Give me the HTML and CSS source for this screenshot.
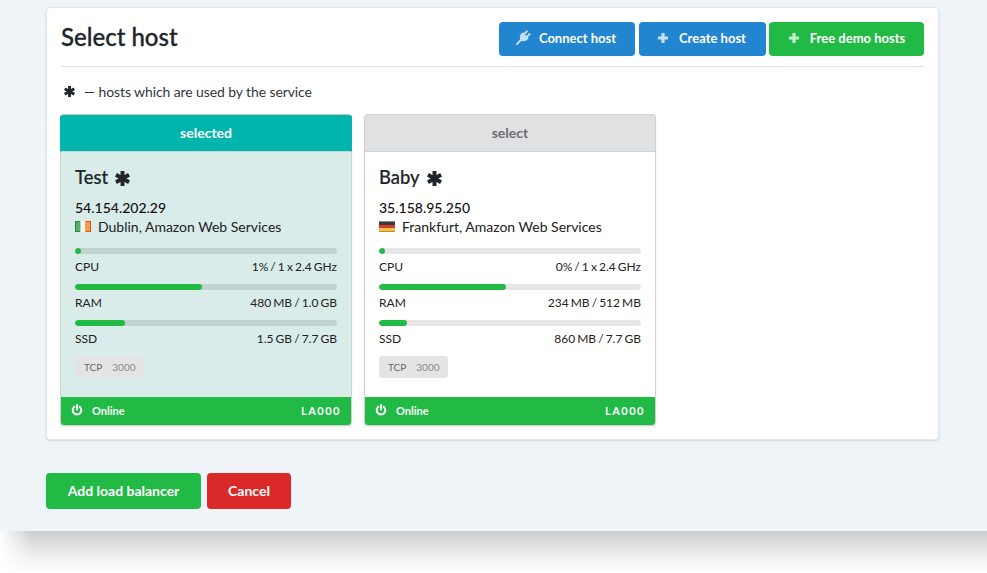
FILE: index.html
```html
<!DOCTYPE html>
<html>
<head>
    <title>Select host</title>
    <link rel="stylesheet" href="styles.css">
</head>
<body>
    <svg class="icon-defs" width="0" height="0">
        <symbol id="i-star" viewBox="0 0 16 16">
            <g stroke="currentColor" stroke-width="4.2">
                <path d="M8 0v16M1 4l14 8M15 4l-14 8"/>
            </g>
        </symbol>
        <symbol id="i-plus" viewBox="0 0 12 12">
            <path fill="currentColor" d="M4.4 1h3.2v3.4H11v3.2H7.6V11H4.4V7.6H1V4.4h3.4z"/>
        </symbol>
        <symbol id="i-plug" viewBox="0 0 16 16">
            <g fill="currentColor" transform="rotate(45 8 8)">
                <rect x="5" y="0" width="2" height="5"/>
                <rect x="9" y="0" width="2" height="5"/>
                <path d="M3.5 4.5h9V7c0 2.500-2 4.500-3.500 4.800V19H7v-7.200C5.500 11.500 3.500 9.500 3.500 7z"/>
            </g>
        </symbol>
        <symbol id="i-power" viewBox="0 0 12 12">
            <g fill="none" stroke="currentColor" stroke-width="2" stroke-linecap="round">
                <path d="M3.3 2.800a4.300 4.300 0 1 0 5.400 0"/>
                <path d="M6 1v4.600"/>
            </g>
        </symbol>
    </svg>

    <div class="app">
        <div class="panel">
            <div class="panel-head">
                <h1>Select host</h1>
                <div class="head-buttons">
                    <a class="btn btn-blue btn-connect"><svg class="btn-icon plug"><use href="#i-plug"/></svg>Connect host</a>
                    <a class="btn btn-blue btn-create"><svg class="btn-icon"><use href="#i-plus"/></svg>Create host</a>
                    <a class="btn btn-green btn-demo"><svg class="btn-icon"><use href="#i-plus"/></svg>Free demo hosts</a>
                </div>
            </div>

            <p class="legend"><svg class="legend-star"><use href="#i-star"/></svg>— hosts which are used by the service</p>

            <div class="hosts">
                <!-- Test -->
                <div class="host host-selected">
                    <div class="host-top">selected</div>
                    <div class="host-body">
                        <h3>Test <svg class="name-star"><use href="#i-star"/></svg></h3>
                        <div class="ip">54.154.202.29</div>
                        <div class="place">
                            <svg class="flag" viewBox="0 0 16 11">
                                <rect width="5.500" height="11" fill="#1f8f3f"/>
                                <rect x="1" y="1" width="4.500" height="9" fill="#55b06c"/>
                                <rect x="5.500" width="5" height="11" fill="#f4f6f2"/>
                                <rect x="10.500" width="5.500" height="11" fill="#e8501c"/>
                                <rect x="10.500" y="1" width="4.500" height="9" fill="#f59a45"/>
                            </svg>
                            Dublin, Amazon Web Services
                        </div>
                        <div class="bar"><div class="bar-fill" style="width: 2.3%"></div></div>
                        <div class="stat"><span>CPU</span><span>1% / 1 x 2.4 GHz</span></div>
                        <div class="bar"><div class="bar-fill" style="width: 48.5%"></div></div>
                        <div class="stat"><span>RAM</span><span>480 MB / 1.0 GB</span></div>
                        <div class="bar"><div class="bar-fill" style="width: 19%"></div></div>
                        <div class="stat"><span>SSD</span><span>1.5 GB / 7.7 GB</span></div>
                        <div class="port"><b>TCP</b>3000</div>
                    </div>
                    <div class="host-foot">
                        <span class="online"><svg class="power"><use href="#i-power"/></svg>Online</span>
                        <span class="la">LA000</span>
                    </div>
                </div>

                <!-- Baby -->
                <div class="host">
                    <div class="host-top">select</div>
                    <div class="host-body">
                        <h3>Baby <svg class="name-star"><use href="#i-star"/></svg></h3>
                        <div class="ip">35.158.95.250</div>
                        <div class="place">
                            <svg class="flag" viewBox="0 0 16 11">
                                <rect width="16" height="1" fill="#8a8a8a"/>
                                <rect y="1" width="16" height="3" fill="#3a3a3a"/>
                                <rect y="4" width="16" height="3" fill="#d8392d"/>
                                <rect y="7" width="16" height="3" fill="#f2c445"/>
                                <rect y="10" width="16" height="1" fill="#b8913a"/>
                            </svg>
                            Frankfurt, Amazon Web Services
                        </div>
                        <div class="bar"><div class="bar-fill" style="width: 2.3%"></div></div>
                        <div class="stat"><span>CPU</span><span>0% / 1 x 2.4 GHz</span></div>
                        <div class="bar"><div class="bar-fill" style="width: 48.5%"></div></div>
                        <div class="stat"><span>RAM</span><span>234 MB / 512 MB</span></div>
                        <div class="bar"><div class="bar-fill" style="width: 10.8%"></div></div>
                        <div class="stat"><span>SSD</span><span>860 MB / 7.7 GB</span></div>
                        <div class="port"><b>TCP</b>3000</div>
                    </div>
                    <div class="host-foot">
                        <span class="online"><svg class="power"><use href="#i-power"/></svg>Online</span>
                        <span class="la">LA000</span>
                    </div>
                </div>
            </div>
        </div>

        <div class="actions">
            <a class="btn btn-green btn-add">Add load balancer</a>
            <a class="btn btn-red btn-cancel">Cancel</a>
        </div>
    </div>
    <div class="app-shadow"></div>
</body>
</html>
```

FILE: styles.css
```css
html, body {
    margin: 0;
    height: 573px;
    overflow: hidden;
    background-color: #fff;
}
body {
    font-family: Lato, "Open Sans", sans-serif;
    color: #212529;
}
.icon-defs {
    display: block;
    height: 0;
}
.app {
    box-sizing: border-box;
    height: 531px;
    padding: 7px 48px 0 46px;
    background-color: #eff4f8;
}
/* soft shadow under the page, fades out towards the left edge */
.app-shadow {
    height: 42px;
    background-image:
        linear-gradient(to right, #fff, rgba(255, 255, 255, 0) 32px),
        linear-gradient(to bottom, #cbcbcb, #dedede 30%, #f2f2f2 65%, #fff);
}
.panel {
    box-sizing: border-box;
    height: 433px;
    padding: 14px 14px 0 14px;
    background-color: #fff;
    border: 1px solid #e3e6e9;
    border-radius: 4px;
    box-shadow: 0 1px 2px rgba(0, 0, 0, 0.12);
}
.panel-head {
    display: flex;
    justify-content: space-between;
    height: 44px;
    border-bottom: 1px solid #dee2e6;
}
h1 {
    margin: 0;
    font-size: 24px;
    font-weight: 500;
    line-height: 30px;
    -webkit-text-stroke: 0.3px #212529;
}
.head-buttons {
    display: flex;
    gap: 3px;
    height: 34px;
}
.btn {
    display: flex;
    align-items: center;
    justify-content: center;
    box-sizing: border-box;
    color: #fff;
    font-size: 14px;
    font-weight: 700;
    border-radius: 4px;
    padding-bottom: 2px;
}
.head-buttons .btn {
    font-size: 13px;
    padding-bottom: 3px;
}
.btn-blue {
    background-color: #2285d0;
}
.btn-green {
    background-color: #21ba45;
}
.btn-red {
    background-color: #db2828;
}
.head-buttons .btn-connect {
    width: 136px;
    margin-right: 1px;
    padding-right: 2px;
}
.head-buttons .btn-create {
    width: 127px;
    padding-right: 2px;
}
.btn-demo {
    width: 155px;
}
.btn-icon {
    width: 12px;
    height: 12px;
    margin-right: 10px;
    opacity: 0.75;
}
.btn-icon.plug {
    width: 15px;
    height: 15px;
    margin-right: 8px;
}
.legend {
    display: flex;
    align-items: center;
    margin: 14px 0 0 3px;
    height: 20px;
    font-size: 14px;
    letter-spacing: -0.1px;
    color: #33373d;
}
.legend-star {
    width: 11px;
    height: 11px;
    margin-right: 9px;
    color: #212529;
}
.hosts {
    display: flex;
    gap: 12px;
    margin: 13px 0 0 -1px;
}
.host {
    box-sizing: border-box;
    display: flex;
    flex-direction: column;
    width: 292px;
    height: 312px;
    border: 1px solid #cfd1d3;
    border-radius: 4px;
    background-color: #fff;
    box-shadow: 0 1px 2px rgba(0, 0, 0, 0.1);
}
.host-top {
    box-sizing: border-box;
    height: 38px;
    margin: -1px -1px 0 -1px;
    line-height: 35px;
    text-align: center;
    font-size: 14px;
    font-weight: 700;
    color: #6b6e72;
    background-color: #e0e1e2;
    border: 1px solid #cfd1d3;
    border-radius: 4px 4px 0 0;
}
.host-selected .host-top {
    color: #fff;
    background-color: #00b5ad;
    border-color: #00b5ad;
    border-top-color: #c6cbcb;
    border-bottom-color: #c6d6d5;
}
.host-body {
    flex: 1;
    padding: 13px 14px 0 14px;
}
.host-selected .host-body {
    background-color: #d9ecea;
}
h3 {
    margin: 0;
    display: flex;
    align-items: center;
    font-size: 18.4px;
    font-weight: 500;
    line-height: 24px;
    -webkit-text-stroke: 0.2px #212529;
}
.name-star {
    width: 15px;
    height: 15px;
    margin: 3px 0 0 7px;
}
.ip {
    margin-top: 10px;
    font-size: 14px;
    font-weight: 500;
    line-height: 17px;
    color: #111;
}
.place {
    display: flex;
    align-items: center;
    margin-top: 1px;
    font-size: 14px;
    line-height: 19px;
    color: #222;
}
.flag {
    width: 16px;
    height: 11px;
    margin-right: 7px;
}
.bar {
    height: 6px;
    margin-top: 10px;
    border-radius: 3px;
    background-color: #e6e6e6;
    overflow: hidden;
}
.place + .bar {
    margin-top: 12px;
}
.host-selected .bar {
    background-color: #c2d2d1;
}
.bar-fill {
    height: 100%;
    border-radius: 3px;
    background-color: #21ba45;
}
.stat {
    display: flex;
    justify-content: space-between;
    margin-top: 5px;
    font-size: 12px;
    line-height: 15px;
    word-spacing: -1px;
    color: #222;
}
.port {
    display: inline-block;
    box-sizing: border-box;
    height: 22px;
    margin-top: 10px;
    padding: 0 9px;
    line-height: 22px;
    font-size: 10px;
    color: #888;
    background-color: #e4e4e4;
    border-radius: 3px;
}
.port b {
    font-weight: 400;
    color: #666;
    margin-right: 10px;
}
.host-foot {
    box-sizing: border-box;
    display: flex;
    align-items: center;
    justify-content: space-between;
    height: 28px;
    padding: 0 10px 2px 10px;
    color: #fff;
    font-size: 11px;
    font-weight: 700;
    background-color: #21ba45;
    border-radius: 0 0 3px 3px;
}
.online {
    display: flex;
    align-items: center;
}
.power {
    width: 12px;
    height: 12px;
    margin-right: 9px;
}
.la {
    letter-spacing: 1.5px;
}
.actions {
    display: flex;
    gap: 6px;
    margin-top: 33px;
}
.btn-add {
    width: 155px;
    height: 36px;
}
.btn-cancel {
    width: 84px;
    height: 36px;
}
```
